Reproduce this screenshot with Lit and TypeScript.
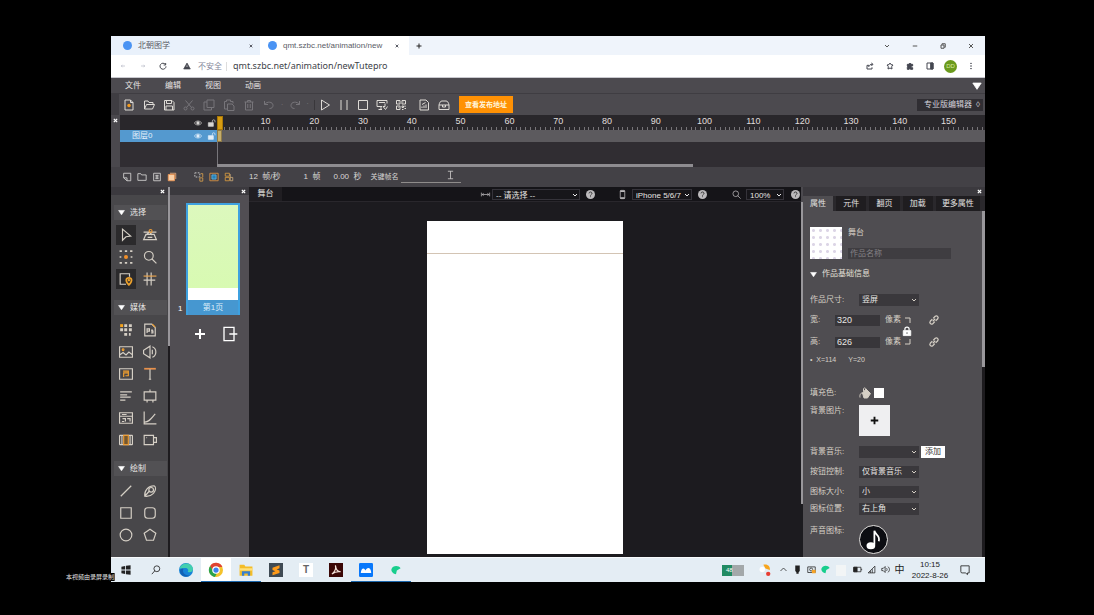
import { LitElement, html, css, svg, SVGTemplateResult } from 'lit';
import { customElement, property } from 'lit/decorators.js';

const ICONS: Record<string, SVGTemplateResult> = {
  reload: svg`<path d="M19 7a9 9 0 1 0 2 6M20 3v6h-6"/>`,
  back: svg`<path d="M20 12H5M10 7l-5 5 5 5"/>`,
  forward: svg`<path d="M4 12h15M14 7l5 5-5 5"/>`,
  warn: svg`<path class="f" d="M12 3l10 18H2z"/><path d="M12 10v5" stroke="#fff"/>`,
  chevdown: svg`<path d="M4 8l8 8 8-8"/>`,
  chevup: svg`<path d="M4 16l8-8 8 8"/>`,
  minus: svg`<path d="M3 12h18"/>`,
  restore: svg`<path d="M4 8h12v13H4zM8 7V3h13v14h-4"/>`,
  x: svg`<path d="M4 4l16 16M20 4L4 20"/>`,
  plus: svg`<path d="M12 2v20M2 12h20"/>`,
  share: svg`<path d="M9 10H3v11h15v-5M8 15c1-6 5-8 12-8M16 3l5 4-5 5"/>`,
  star: svg`<path d="M12 3l3 5 6 1-4 5 1 7-6-3-6 3 1-7-4-5 6-1z"/>`,
  puzzle: svg`<path class="f" d="M4 7h5a3 3 0 1 1 6 0h5v5a3 3 0 1 0 0 5v5h-6a3 3 0 0 0-5 0H4v-6a3 3 0 0 0 0-4z"/>`,
  sidepanel: svg`<path d="M3 3h18v18H3z"/><path class="f" d="M14 3h7v18h-7z"/>`,
  dots: svg`<circle class="f" cx="12" cy="4" r="1"/><circle class="f" cx="12" cy="12" r="1"/><circle class="f" cx="12" cy="20" r="1"/>`,
  tri: svg`<path class="f" d="M2 5h20L12 20z"/>`,
  newdoc: svg`<path d="M4 2h11l5 5v15H4zM15 2v5h5"/><circle cx="12" cy="13" r="3.5" fill="#f39a1c" stroke="none"/>`,
  open: svg`<path d="M3 20V4h7l2 3h8v4M3 20l4-9h16l-4 9z"/>`,
  save: svg`<path d="M3 3h15l4 4v15H3zM7 3v6h10V3M6 22v-8h13v8"/>`,
  cut: svg`<path d="M5 3l12 14M19 3L7 17"/><circle cx="5" cy="19" r="3"/><circle cx="19" cy="19" r="3"/>`,
  copy: svg`<path d="M8 2h14v15H8zM8 6H2v16h15v-5"/>`,
  paste: svg`<path d="M9 20H3V5h4V2h8v3h5v4M9 10h9l4 4v9H9z"/>`,
  trash: svg`<path d="M3 6h18M5 6v16h14V6M9 6V3h6v3M9.500 10v8M14.500 10v8"/>`,
  undo: svg`<path d="M3 4v7h7M3 11c5-7 17-6 17 2 0 4-3 6-7 6"/>`,
  redo: svg`<path d="M21 4v7h-7M21 11C16 4 4 5 4 13c0 4 3 6 7 6"/>`,
  play: svg`<path d="M5 2l16 10L5 22z"/>`,
  pause: svg`<path d="M6 2v20M18 2v20"/>`,
  square: svg`<path d="M3 3h18v18H3z"/>`,
  rsquare: svg`<rect x="3" y="3" width="18" height="18" rx="5"/>`,
  circle: svg`<circle cx="12" cy="12" r="10"/>`,
  preview: svg`<path d="M12 15H2V3h20v6M10 15v6M5 21h7M18 9v6h-4l5 6 4-6M6 7h12"/>`,
  qr: svg`<path d="M3 3h7v7H3zM14 3h7v7h-7zM3 14h7v7H3zM6 6h1M17 6h1M6 17h1M14 14h3v3h-3zM19 19h3M20 13v3M14 21h3"/>`,
  report: svg`<path d="M4 2h12l5 5v15H4zM8 18v-3M12 18v-5M16 18v-7M8 11l7-4"/>`,
  box: svg`<path d="M2 12c1-5 3-8 6-8h8c3 0 5 3 6 8v9H2zM2 12h20M9 12v4h6v-4"/>`,
  eye: svg`<path d="M1 12c5-8 17-8 22 0-5 8-17 8-22 0z"/><circle class="f" cx="12" cy="12" r="4"/>`,
  unlock: svg`<path class="f" d="M1 11h15v11H1z"/><path d="M13 11V6c0-5 8-5 8 0v4"/>`,
  lock: svg`<path class="f" d="M3 11h18v12H3z"/><path d="M7 11V7c0-6 10-6 10 0v4" stroke-width="3"/><path d="M12 15v4" stroke="#444"/>`,
  layer: svg`<path d="M4 3h17v18h-9l-8-7zM4 14h8v7"/>`,
  folder: svg`<path d="M2 20V4h7l2 3h11v13z"/>`,
  dup: svg`<path d="M4 3h16v18H4zM8 8h8M8 12h8M8 16h8M12 8v8"/>`,
  stack: svg`<path d="M7 3h14v14" stroke="#f4b27c"/><path d="M3 6h15v15H3z" fill="#f8cfa7" stroke="#ef9550"/>`,
  onion1: svg`<path d="M2 2h12v10H2z" stroke-dasharray="4 3"/><path d="M16 4h5v8M14 14h7v8h-7z" stroke="#d7a04d"/>`,
  onion2: svg`<path d="M2 3h20v18H2z" stroke="#df9645"/><path d="M7 7h10v10H7z" fill="#2583ba" stroke="#64b4e0"/>`,
  onion3: svg`<path d="M3 3h10v7H3zM3 13h10v8H3z" stroke="#d99b40"/><path d="M15 5v16h6v-8h-6" stroke="#c8a777"/>`,
  cursor: svg`<path d="M6 2l14 12-8 1-6 6z"/>`,
  path: svg`<path d="M1 7h22M1 20l4-9h14l4 9zM5 12l6-5 5 5M8 16h8"/><circle cx="13" cy="5" r="2.500" stroke="#e99b3a"/>`,
  transform: svg`<path d="M1 2h4M10 2h4M19 2h4M1 22h4M10 22h4M19 22h4M1 12h3M20 12h3" stroke-width="3"/><circle cx="12" cy="12" r="3.500" fill="#f2902a" stroke="none"/>`,
  search: svg`<circle cx="10" cy="10" r="7.500"/><path d="M15 15l8 8"/>`,
  searchr: svg`<circle cx="14" cy="9" r="7"/><path d="M9 14l-7 8"/>`,
  stagepin: svg`<path d="M12 21H2V3h16v5"/><path d="M17 22c-7-7-5-12 0-12s7 5 0 12z" stroke="#eca12c" stroke-width="3"/><circle cx="17" cy="14" r="1" stroke="#eca12c"/>`,
  guides: svg`<path d="M7 1v22M14 1v22M1 14h20"/><path d="M1 7h22" stroke="#e8a34c"/>`,
  grid: svg`<path class="f" d="M9 2h5v5H9zM17 2h5v5h-5zM9 9h5v5H9zM17 9h5v5h-5zM2 9h5v5H2zM9 17h5v5H9zM17 17h3v5h-3z" stroke="none"/><path d="M2 2h5v5H2z" fill="#f7a51d" stroke="none"/>`,
  ps: svg`<path d="M3 2h12l6 6v14H3zM7 17v-7h4v4H7M17 12h-2v2h2v3h-3"/><path d="M16 2l5 5" stroke="#f1a02f"/>`,
  image: svg`<path d="M1 3h22v18H1zM1 17l6-4 5 4 5-5 6 5"/><circle cx="7" cy="8" r="1.500" stroke="#f1a02f"/>`,
  sound: svg`<path d="M1 9v6l11 7V2zM12 2v20M16 3c8 3 8 15 0 18M16 8v8"/>`,
  video: svg`<path d="M1 3h22v18H1z"/><path d="M7 7h9v3H8v7M16 10v5h-5" stroke="#f1a02f"/>`,
  text: svg`<path d="M2 3h20" stroke="#e6914c" stroke-width="3"/><path d="M12 4v18M10 21h4"/>`,
  lines: svg`<path d="M2 5h20M2 10h12M2 14h18M2 19h9"/>`,
  board: svg`<path d="M2 5h20v14H2zM12 5V1M7 19v4M17 19v4"/>`,
  form: svg`<path d="M1 3h22v18H1zM1 9h22M5 6h8M6 13h5v5M14 13h5v5M5 18h4"/>`,
  chart: svg`<path d="M2 1v21h21M3 19c8 0 11-6 18-14"/>`,
  film: svg`<path d="M1 4v16M5 4v16M19 4v16M23 4v16M1 4h22M1 20h22"/><path d="M8 4h8v16H8z" stroke="#e99a34" fill="#74572f"/>`,
  mug: svg`<path d="M2 4h16v16H2zM18 8h5v8h-5M6 8h1"/>`,
  line: svg`<path d="M3 21L21 3"/>`,
  pen: svg`<path d="M3 21C2 11 9 3 19 3c4 2 3 8-1 13-4 4-9 6-15 5zM3 21l8-9"/><circle cx="14" cy="10" r="4"/>`,
  penta: svg`<path d="M12 2l10 7-4 12H6L2 9z"/>`,
  addpage: svg`<path d="M18 7V2H3v20h15v-5M11 12h12M18 7v10"/>`,
  width: svg`<path d="M1 7v10M23 7v10M3 12h18M7 9l-4 3 4 3M17 9l4 3-4 3"/>`,
  phone: svg`<rect x="6" y="1" width="12" height="22" rx="2"/><path d="M6 3h12M6 21h12" stroke-width="4"/>`,
  help: svg`<circle class="f" cx="12" cy="12" r="12" stroke="none"/><path d="M8 9c0-5 8-5 8 0 0 3-4 3-4 6M12 17v2" stroke="#333" stroke-width="2.500"/>`,
  link: svg`<path d="M9 15l6-6M10 8l5-5c4-3 9 2 6 6l-5 5M14 16l-5 5c-4 3-9-2-6-6l5-5"/>`,
  bracketTop: svg`<path d="M0 4h20v20"/>`,
  bracketBot: svg`<path d="M20 0v20H0"/>`,
  bucket: svg`<path class="f" d="M7 12l7-8 9 9-6 9H10z"/><path d="M8 12c-5-1-7 4-6 9M9 9V4c1-4 5-2 5 1"/>`,
  note: svg`<path d="M13 18V2c1 5 7 5 5 12" stroke-width="2"/><ellipse class="f" cx="9" cy="19" rx="4" ry="3"/>`,
  ibeam: svg`<path d="M5 2h14M5 22h14M12 2v20"/>`,
  win: svg`<path class="f" stroke="none" d="M1 4l9-1.500V11H1zM12 2l11-1.500V11H12zM1 13h9v8.500L1 20zM12 13h11v10.500L12 22z"/>`,
  edge: svg`<circle cx="12" cy="12" r="12" fill="#1683d8" stroke="none"/><path d="M1 9C4-2 22-2 24 10c0 6-6 7-9 5 3-4-2-8-7-6-3 0-6 1-7 0z" fill="#43cfae" stroke="none"/><path d="M8 10c-4 5 2 13 12 11-10 6-20-1-18-9 1-2 4-3 6-2z" fill="#1261b5" stroke="none"/>`,
  chrome: svg`<circle cx="12" cy="12" r="12" fill="#f4c22b" stroke="none"/><path d="M2 5a12 12 0 0 1 21 2H12l-5 8z" fill="#df4332" stroke="none"/><path d="M2 5l6 10 5 4-3 5A12 12 0 0 1 2 5z" fill="#2ba24c" stroke="none"/><circle cx="12" cy="12" r="5.500" fill="#3f82ee" stroke="#fff" stroke-width="2"/>`,
  explorer: svg`<path d="M1 3h8l2 3h12v16H1z" fill="#f4bd28" stroke="none"/><path d="M1 9h22v4H1z" fill="#ffe07a" stroke="none"/><path d="M5 22v-8h14v8h-4v-4H9v4z" fill="#357fd0" stroke="none"/>`,
  sublime: svg`<path d="M0 0h24v24H0z" fill="#3f4a54" stroke="none"/><path d="M6 8l12-4v5l-5 2 5 2v4L6 21v-5l5-2-5-2z" fill="#ff9b1a" stroke="none"/>`,
  acrobat: svg`<path d="M0 0h24v24H0z" fill="#3a0706" stroke="none"/><path d="M5 19C11 14 12 8 11 4c1 8 4 11 9 11-6-1-10 0-15 4z" stroke="#f5e3da"/>`,
  meet: svg`<rect width="24" height="24" rx="2" fill="#0878fb" stroke="none"/><path d="M3 17c1-9 6-10 8-4 3-8 10-5 10 4z" fill="#fff" stroke="none"/>`,
  leaf: svg`<path d="M1 10C4 0 19 0 23 8l-9 5-2 9C6 21 0 16 1 10z" fill="#18ce8d" stroke="none"/>`,
  weather: svg`<path d="M8 3c8-2 13 3 12 10l-8-3z" fill="#f7a51d" stroke="none"/><circle cx="6" cy="12" r="5" fill="#fff" stroke="none"/><circle cx="17" cy="20" r="4" fill="#e83d32" stroke="none"/>`,
  mic: svg`<path class="f" stroke="none" d="M6 1h12v15l-3 3v4H9v-4l-3-3z"/>`,
  cam: svg`<path d="M2 5h20v15H2z"/><circle cx="11" cy="12" r="4"/><path d="M13 13h10v9H13z" fill="#f6a326" stroke="none"/>`,
  battery: svg`<path d="M2 6h19v12H2zM23 10v4"/><path class="f" d="M2 6h9v12H2z"/>`,
  wifi: svg`<path d="M3 21L21 3v18zM9 16v5M14 11v10"/>`,
  speaker: svg`<path d="M2 9v6h4l5 5V4L6 9zM14 8c3 2 3 6 0 8M18 4c6 4 6 12 0 16"/>`,
  notif: svg`<path d="M2 2h20v17h-4v4l-5-4H5c-2 0-3-1-3-3z"/>`,
};

@customElement('ui-icon')
export class UiIcon extends LitElement {
  @property() name = '';
  static styles = css`
    :host { display: inline-flex; flex: none; width: 12px; height: 12px; }
    svg { width: 100%; height: 100%; overflow: visible; fill: none; stroke: currentColor; stroke-width: var(--sw, 2); }
    .f { fill: currentColor; }
  `;
  render() {
    return html`<svg viewBox="0 0 24 24" aria-hidden="true">${ICONS[this.name]}</svg>`;
  }
}

const icon = (name: string, cls = '') => html`<ui-icon name=${name} class=${cls}></ui-icon>`;
const btn = (name: string, label: string, cls = '') =>
  html`<button class="ib ${cls}" aria-label=${label}>${icon(name)}</button>`;
const select = (id: string, value: string, cls = '', label = '') => html`
  <span class="sel ${cls}"><select id=${id} aria-label=${label || value || id}><option>${value}</option></select>${icon('chevdown', 'chev')}</span>`;

@customElement('app-root')
export class AppRoot extends LitElement {
  static styles = css`
    :host {
      display: flex; flex-direction: column; position: relative; box-sizing: border-box;
      height: 100vh; padding: 36px 109px 33px 111px; background: #000; color: #d8d6d4;
      font: 8px/12px "Liberation Sans", "Noto Sans CJK SC", sans-serif; overflow: hidden;
    }
    * { box-sizing: border-box; }
    button, input, select { font: inherit; color: inherit; margin: 0; padding: 0; border: 0; background: none; min-width: 0; }
    a { color: inherit; text-decoration: none; }
    .ib { display: flex; align-items: center; justify-content: center; flex: none; }
    .grow { flex: 1; }

    .tabs { display: flex; align-items: center; flex: none; height: 19px; background: #eff4fb; color: #5a5c66; }
    .tab { display: flex; align-items: center; gap: 6px; height: 100%; padding: 0 7px 0 12px; width: 149px; background: #e9f1fb; }
    .tab.on { background: #fff; padding: 0 10px 0 8px; }
    .tab .t { flex: 1; white-space: nowrap; }
    .tab ui-icon { width: 4px; height: 4px; --sw: 6; }
    .dot { width: 9px; height: 9px; border-radius: 50%; background: #4a93f3; flex: none; }
    .newtab { width: 20px; color: #222; }
    .newtab ui-icon, .winctl ui-icon { width: 6px; height: 6px; --sw: 4; }
    .winctl { display: flex; color: #555; }
    .winctl .ib { width: 28px; }

    .addr { display: flex; align-items: center; flex: none; height: 23px; background: #fff; color: #44464e; border-bottom: 1px solid #c9c9cf; }
    .nav { display: flex; padding-left: 2px; }
    .nav .ib { width: 20px; }
    .nav .dim { color: #b9bcc8; }
    .nav .dim ui-icon { width: 6px; height: 6px; }
    .nav ui-icon { width: 8px; height: 8px; --sw: 3; }
    .warn { width: 8px; height: 8px; margin-left: 10px; }
    .unsafe { margin: 0 6px 0 7px; color: #85879a; border-right: 1px solid #ddd; padding-right: 4px; line-height: 9px; }
    .url { flex: 1; font-size: 9px; font-family: "Noto Sans", sans-serif; color: #3d3f49; }
    .ext { display: flex; align-items: center; color: #444650; padding-right: 4px; }
    .ext .ib { width: 20px; }
    .ext ui-icon { width: 8px; height: 8px; --sw: 3; }
    .ava { display: flex; align-items: center; justify-content: center; width: 13px; height: 13px; margin: 0 4px; border-radius: 50%; background: #6b9a1c; color: #d5e9a0; font-size: 6px; }

    .menu { display: flex; align-items: center; flex: none; height: 16px; padding: 0 3px 0 2px; background: #4c4a4f; border-bottom: 1px solid #3f3d42; color: #e6e4e2; }
    .menu button { width: 40px; }
    .menu .ib { width: 10px; color: #fff; }
    .menu ui-icon { width: 10px; height: 10px; }

    .bar { display: flex; align-items: center; flex: none; height: 21px; padding: 0 2px 0 8px; background: linear-gradient(90deg, #3f3d42 8px, #4c4a4f 8px); color: #dedbd6; }
    .bar .ib { width: 20px; }
    .bar .p { width: 19px; }
    .bar .dim { color: #77757a; }
    .bar ui-icon { width: 12px; height: 12px; }
    .sep { width: 6px; text-align: center; color: #77757a; }
    .sep.end { width: 10px; border-right: 1px solid #39373b; height: 10px; line-height: 8px; padding-right: 4px; }
    .g4 { width: 4px; }
    .pub { height: 17px; padding: 0 6px; margin-left: 5px; background: #ff9104; color: #fff5dc; font-size: 7px; font-weight: 700; white-space: nowrap; }
    .ver { display: flex; align-items: center; gap: 4px; height: 12px; padding: 0 3px 0 7px; background: #302e33; color: #d5d4dc; white-space: nowrap; }

    .time { display: grid; grid-template-columns: 9px 97px 1fr; grid-template-rows: 15px 12px 22px 3px; flex: none; background: #302d32; }
    .edge { grid-row: 1 / 5; display: flex; justify-content: center; padding-top: 3px; background: #4a484d; color: #fff; }
    .lh, .lrow { display: flex; align-items: center; gap: 6px; padding-right: 1px; }
    .lh { justify-content: flex-end; background: #29272b; }
    .lh ui-icon, .lrow ui-icon { width: 8px; height: 8px; }
    .lrow { background: #5499cf; color: #e2effa; padding-left: 12px; }
    .lrow span { flex: 1; }
    .ruler { position: relative; background: #29272b; overflow: hidden; }
    .nums { display: grid; grid-template-columns: repeat(15, 1fr); margin: 0 12px 0 24px; text-align: center; line-height: 13px; font-size: 9px; color: #e0dfdd; }
    .ticks { position: absolute; left: 7px; right: 0; bottom: 0; display: flex; justify-content: space-between; }
    .ticks i { width: 1px; height: 3px; background: #777478; }
    .head { position: absolute; left: 0; top: 1px; width: 6px; height: 14px; background: #d79c12; border: 1px solid #a97808; }
    .frames { background: #5c5a5e; }
    .frames i { display: block; width: 5px; height: 12px; background: #c5ad6b; border: 1px solid #8f7b48; }
    .empty { grid-column: 2; }
    .fr { border-left: 1px solid #77757a; }
    .hs { grid-column: 3; width: 62%; height: 3px; background: #8e8c90; }
    .tbar { display: flex; align-items: center; flex: none; height: 20px; padding-left: 8px; background: #434146; color: #d9d7d6; position: relative; white-space: nowrap; }
    .tbar .ib { width: 15px; }
    .tbar ui-icon { width: 10px; height: 10px; }
    .tbar .gap { width: 12px; }
    .tbar .v { margin-left: 13px; }
    .tbar .w { margin-left: 23px; }
    .tbar label { margin-left: 9px; font-size: 7px; }
    .tbar input { width: 60px; height: 12px; border-bottom: 1px solid #8f8c8b; margin-left: 2px; }
    .tbar .ibeam { position: absolute; left: 335px; top: 3px; width: 9px; height: 10px; }

    .work { display: flex; flex: 1; min-height: 0; background: #4c4a4f; }
    .strip { display: flex; align-items: center; justify-content: flex-end; flex: none; height: 8px; padding-right: 3px; background: #3b393e; color: #fff; }
    .close { width: 5px; height: 5px; --sw: 6; }
    .col { display: flex; flex-direction: column; flex: none; }
    .tools { width: 57px; background: #48474a; }
    .inner { padding: 10px 1px 0 3px; flex: 1; min-height: 0; overflow: hidden; }
    .sec { display: flex; align-items: center; gap: 5px; height: 15px; margin: 0; padding-left: 4px; font: inherit; background: #525154; color: #e8e6e4; }
    .sec ui-icon, .h ui-icon { width: 7px; height: 7px; color: #fff; }
    .tg { display: grid; grid-template-columns: 24px 24px; grid-auto-rows: 22px; padding: 4px 0 10px; color: #d5cfc5; }
    .tg .ib { margin: 1px 2px; }
    .tg .ib.sel0 { background: #2b2a2c; }
    .tg ui-icon { width: 14px; height: 14px; }
    .vs { width: 2px; flex: none; display: flex; flex-direction: column; background: #1d1b1e; }
    .vs::before { content: ""; height: 43%; background: #99979b; }
    .pages { width: 79px; background: #514e53; }
    .pg { display: flex; align-items: flex-end; gap: 3px; padding: 8px 9px 0 8px; }
    .pg .n { width: 5px; color: #fff; }
    .thumb { flex: 1; background: #4697d0; border: 2px solid #3ea1e0; border-bottom: 0; text-align: center; color: #dcecf8; }
    .thumb .pic { height: 95px; background: linear-gradient(#dcf8bd, #d8fab2 83px, #fff 83px); }
    .thumb .nm { line-height: 15px; }
    .pa { display: flex; gap: 14px; padding: 11px 10px 0 22px; color: #fff; }
    .pa ui-icon { width: 16px; height: 16px; }
    .pa .ib:first-child { width: 16px; }
    .pa .ib:first-child ui-icon { width: 12px; height: 12px; --sw: 4; }

    .stage { flex: 1; display: flex; flex-direction: column; background: #1c1b1f; min-width: 0; }
    .sbar { display: flex; align-items: center; flex: none; height: 15px; background: #151418; border-bottom: 1px solid #29272c; white-space: nowrap; }
    .stab { width: 33px; height: 14px; background: #201e22; color: #e6e3e0; flex: none; }
    .sbar .grow { min-width: 0; }
    .sbar ui-icon { width: 9px; height: 9px; color: #bcbabc; }
    .sbar .sel ui-icon { width: 6px; height: 6px; color: #eee; }
    .sbar .ib { width: 20px; }
    .sbar .ib.last { width: 17px; justify-content: flex-end; padding-right: 1px; }
    .sbar .sel { height: 11px; }
    .sbar .sel select { border: 1px solid #35333a; padding-left: 3px; background: #17161a; }
    .g12 { width: 12px; }
    .g11 { width: 14px; }
    .sel { position: relative; display: flex; flex: none; height: 12px; }
    .sel select { appearance: none; width: 100%; height: 100%; padding-left: 3px; background: #3a383c; color: #e6e4e2; }
    .sel .chev { position: absolute; right: 2px; top: 3px; width: 6px; height: 6px; --sw: 4; pointer-events: none; }
    .w88 { width: 88px; } .w60 { width: 60px; } .w38 { width: 38px; }
    .canvas { flex: 1; width: 196px; align-self: center; margin: 19px 0 3px; background: #fff; }
    .canvas::before { content: ""; display: block; height: 32px; border-bottom: 1px solid #d3c4b4; }
    .vs.st { background: #1c1b1f; margin-top: 15px; width: 2px; }
    .vs.st::before { height: 85%; }

    .props { width: 182px; background: #4f4d51; }
    .props .strip { height: 9px; }
    .ptabs { display: flex; gap: 3px; flex: none; height: 15px; background: #2a282c; color: #e3e1e0; padding-right: 5px; }
    .ptabs button { flex: 30; background: #1f1d20; white-space: nowrap; }
    .ptabs button.on { background: #4f4d51; }
    .ptabs button:last-child { flex: 44; }
    .pwrap { display: flex; flex: 1; min-height: 0; }
    .pbody { flex: 1; min-width: 0; padding: 16px 7px 0 7px; overflow: hidden; color: #d6d0c6; }
    .phead { display: flex; gap: 6px; height: 32px; padding-right: 24px; }
    .chk { width: 32px; height: 32px; flex: none; background: #fff radial-gradient(#dcd5e6 1px, #fff 2px) 0 0 / 7px 7px; }
    .phead div { flex: 1; display: flex; flex-direction: column; justify-content: space-between; }
    .phead input { width: 100%; height: 11px; padding-left: 2px; background: #3f3d41; }
    .phead input::placeholder { color: #858286; opacity: 1; }
    .h { display: flex; align-items: center; gap: 5px; height: 16px; margin: 7px 0 10px; font: inherit; color: #e4e0d8; }
    .r { display: flex; align-items: center; height: 16px; margin-top: 4px; }
    .r > label, .r > .l { width: 49px; flex: none; white-space: nowrap; }
    .dims { display: grid; grid-template-columns: 25px 45px 5px 16px 13px 15px 1fr; grid-template-rows: 16px 16px; row-gap: 6px; align-items: center; position: relative; margin: 4px 0 2px; }
    .dims input { grid-column: 2; height: 11px; padding-left: 2px; background: #38363a; font-size: 9px; color: #e8e6e4; }
    .dims .u { grid-column: 4; white-space: nowrap; }
    .dims .b { grid-column: 5; width: 6px; height: 6px; justify-self: center; --sw: 4; }
    .dims a { grid-column: 7; display: flex; }
    .dims a ui-icon { width: 10px; height: 10px; --sw: 3; }
    .dims .lk { position: absolute; left: 92px; top: 14px; color: #fff; }
    .dims .lk ui-icon { width: 10px; height: 10px; }
    .xy { height: 16px; gap: 12px; margin: 0 0 17px; font-size: 7px; }
    .sw { width: 10px; height: 10px; margin-left: 3px; background: #fff; }
    .top { align-items: flex-start; height: 31px; }
    .addimg { width: 31px; height: 31px; background: #efeff1; color: #111; }
    .addimg ui-icon { width: 9px; height: 9px; --sw: 5; }
    .r.m8 { margin-top: 8px; }
    .r.m1 { margin-top: 1px; }
    .add { width: 24px; height: 12px; margin-left: 2px; background: #fff; color: #333; }
    .mus { width: 29px; height: 29px; border: 1px solid #e3e1df; border-radius: 50%; background: #0c0d12; color: #fff; }
    .mus ui-icon { width: 21px; height: 21px; }
    .vs.pr { width: 3px; }
    .vs.pr::before { height: 45%; }

    .task { display: flex; align-items: center; flex: none; height: 25px; background: #e4edf4; border-top: 1px solid #f7fafc; color: #222; }
    .task .ib { width: 30px; height: 100%; border-bottom: 1px solid transparent; }
    .task .ib.run { border-color: #1c67ad; }
    .task .ib.on { background: #fff; }
    .task .ib ui-icon { width: 14px; height: 14px; }
    .task .ib.sm ui-icon { width: 10px; height: 10px; }
    .tt { display: flex; align-items: center; justify-content: center; width: 14px; height: 14px; background: #fff; color: #666; font-size: 10px; font-weight: 700; }
    .task .chip { width: 22px; height: 11px; padding-left: 4px; margin-right: 11px; background: linear-gradient(90deg, #218b63 10px, #a3a8aa 10px); color: #fff; font-size: 6px; line-height: 11px; }
    .task .tray { width: 14px; }
    .task .tray ui-icon { width: 9px; height: 9px; }
    .task .tray.big { width: 21px; }
    .task .tray.big ui-icon { width: 13px; height: 13px; }
    .ime { width: 15px; text-align: center; font-size: 10px; }
    .blank { width: 10px; height: 11px; margin: 0 4px; background: #f2f5f6; }
    .clock { width: 46px; text-align: center; font-size: 8px; line-height: 11px; }
    .task .nt { width: 24px; margin-right: 8px; }
    .task .nt ui-icon { width: 10px; height: 10px; }
    .cap { position: absolute; left: 66px; bottom: 34px; height: 8px; display: flex; align-items: center; font-size: 6px; line-height: 8px; color: #e5e5e5; white-space: nowrap; background: #000; border-right: 1px solid #555; }
  `;

  render() {
    const tools = (rows: [string, string][], on: string[] = []) => html`<div class="tg">
      ${rows.map(([n, l]) => btn(n, l, on.includes(n) ? 'sel0' : ''))}</div>`;
    return html`
      <div class="tabs">
        <div class="tab"><span class="dot"></span><span class="t">北朝图学</span>${icon('x')}</div>
        <div class="tab on"><span class="dot"></span><span class="t">qmt.szbc.net/animation/new</span>${icon('x')}</div>
        ${btn('plus', '新标签页', 'newtab')}
        <span class="grow"></span>
        <div class="winctl">${btn('chevdown', '搜索标签页')}${btn('minus', '最小化')}${btn('restore', '还原')}${btn('x', '关闭')}</div>
      </div>
      <div class="addr">
        <div class="nav">${btn('back', '后退', 'dim')}${btn('forward', '前进', 'dim')}${btn('reload', '刷新')}</div>
        ${icon('warn', 'warn')}<span class="unsafe">不安全</span>
        <input class="url" aria-label="地址" .value=${'qmt.szbc.net/animation/newTutepro'} />
        <div class="ext">${btn('share', '分享')}${btn('star', '收藏')}${btn('puzzle', '扩展')}${btn('sidepanel', '侧边栏')}<button class="ava" aria-label="用户">DD</button>${btn('dots', '更多')}</div>
      </div>

      <div class="menu">
        <button>文件</button><button>编辑</button><button>视图</button><button>动画</button>
        <span class="grow"></span>${btn('tri', '收起')}
      </div>
      <div class="bar">
        ${btn('newdoc', '新建')}${btn('open', '打开')}${btn('save', '保存')}
        ${btn('cut', '剪切', 'dim')}${btn('copy', '复制', 'dim')}${btn('paste', '粘贴', 'dim')}${btn('trash', '删除', 'dim')}
        ${btn('undo', '撤销', 'dim')}<span class="sep">·</span>${btn('redo', '重做', 'dim')}<span class="sep end">·</span>
        ${btn('play', '播放', 'p')}${btn('pause', '暂停', 'p')}${btn('square', '停止', 'p')}${btn('preview', '预览', 'p')}${btn('qr', '二维码', 'p')}
        <span class="g4"></span>${btn('report', '统计')}${btn('box', '素材库')}
        <button class="pub">查看发布地址</button>
        <span class="grow"></span>
        <button class="ver">专业版编辑器 <span>◊</span></button>
      </div>

      <div class="time">
        <div class="edge">${icon('x', 'close')}</div>
        <div class="lh">${icon('eye')}${icon('unlock')}</div>
        <div class="ruler">
          <div class="nums">${Array.from({ length: 15 }, (_, i) => html`<span>${(i + 1) * 10}</span>`)}</div>
          <div class="ticks">${Array.from({ length: 157 }, () => html`<i></i>`)}</div>
          <div class="head"></div>
        </div>
        <div class="lrow"><span>图层0</span>${icon('eye')}${icon('unlock')}</div>
        <div class="frames"><i></i></div>
        <div class="empty"></div><div class="fr"></div>
        <div class="hs"></div>
      </div>
      <div class="tbar">
        ${btn('layer', '新建图层')}${btn('folder', '新建文件夹')}${btn('dup', '复制图层')}${btn('stack', '删除图层')}
        <span class="gap"></span>${btn('onion1', '洋葱皮')}${btn('onion2', '洋葱皮轮廓')}${btn('onion3', '编辑多帧')}
        <span class="v">12&nbsp; 帧/秒</span><span class="w">1&nbsp; 帧</span><span class="v">0.00&nbsp; 秒</span>
        <label for="kf">关键帧名</label><input id="kf" />
        ${icon('ibeam', 'ibeam')}
      </div>

      <div class="work">
        <div class="col tools">
          <div class="strip">${icon('x', 'close')}</div>
          <div class="inner">
            <h2 class="sec">${icon('tri')}选择</h2>
            ${tools([['cursor', '选择'], ['path', '节点'], ['transform', '变形'], ['search', '缩放'], ['stagepin', '舞台定位'], ['guides', '辅助线']], ['cursor', 'stagepin'])}
            <h2 class="sec">${icon('tri')}媒体</h2>
            ${tools([['grid', '素材'], ['ps', 'PSD'], ['image', '图片'], ['sound', '声音'], ['video', '视频'], ['text', '文字'], ['lines', '段落'], ['board', '画板'], ['form', '表单'], ['chart', '图表'], ['film', '幻灯片'], ['mug', '控件']])}
            <h2 class="sec">${icon('tri')}绘制</h2>
            ${tools([['line', '直线'], ['pen', '钢笔'], ['square', '矩形'], ['rsquare', '圆角矩形'], ['circle', '圆形'], ['penta', '多边形']])}
          </div>
        </div>
        <div class="vs"></div>
        <div class="col pages">
          <div class="strip">${icon('x', 'close')}</div>
          <div class="pg"><span class="n">1</span><div class="thumb"><div class="pic"></div><div class="nm">第1页</div></div></div>
          <div class="pa">${btn('plus', '添加页')}${btn('addpage', '插入页')}</div>
        </div>

        <div class="stage">
          <div class="sbar">
            <button class="stab">舞台</button><span class="grow"></span>
            ${icon('width')}&nbsp;${select('fit', '-- 请选择 --', 'w88', '适配')}${btn('help', '帮助')}
            <span class="g12"></span>${btn('phone', '设备')}
            ${select('dev', 'iPhone 5/6/7', 'w60', '设备')}${btn('help', '帮助')}<span class="g11"></span>
            ${btn('search', '缩放')}
            ${select('zoom', '100%', 'w38', '缩放')}${btn('help', '帮助', 'last')}
          </div>
          <div class="canvas"></div>
        </div>
        <div class="vs st"></div>

        <div class="col props">
          <div class="strip">${icon('x', 'close')}</div>
          <div class="ptabs"><button class="on">属性</button><button>元件</button><button>翻页</button><button>加载</button><button>更多属性</button></div>
          <div class="pwrap">
            <div class="pbody">
              <div class="phead"><span class="chk"></span><div><span>舞台</span><input placeholder="作品名称" aria-label="作品名称" /></div></div>
              <h2 class="h">${icon('tri')}作品基础信息</h2>
              <div class="r"><label for="size">作品尺寸:</label>${select('size', '竖屏', 'w60', '作品尺寸')}</div>
              <div class="dims">
                <label for="wd">宽:</label><input id="wd" .value=${'320'} /><span class="u">像素</span>${icon('bracketTop', 'b')}<a href="#" aria-label="绑定宽度">${icon('link')}</a>
                <label for="ht">高:</label><input id="ht" .value=${'626'} /><span class="u">像素</span>${icon('bracketBot', 'b')}<a href="#" aria-label="绑定高度">${icon('link')}</a>
                <button class="ib lk" aria-label="锁定比例">${icon('lock')}</button>
              </div>
              <div class="r xy"><span>•&nbsp; X=114</span><span>Y=20</span></div>
              <div class="r"><span class="l">填充色:</span>${btn('bucket', '填充')}<button class="sw" aria-label="颜色"></button></div>
              <div class="r top"><span class="l">背景图片:</span>${btn('plus', '添加图片', 'addimg')}</div>
              <div class="r m8"><label for="bgm">背景音乐:</label>${select('bgm', '', 'w60', '背景音乐')}<button class="add">添加</button></div>
              <div class="r"><label for="ctl">按钮控制:</label>${select('ctl', '仅背景音乐', 'w60', '按钮控制')}</div>
              <div class="r"><label for="isz">图标大小:</label>${select('isz', '小', 'w60', '图标大小')}</div>
              <div class="r m1"><label for="ips">图标位置:</label>${select('ips', '右上角', 'w60', '图标位置')}</div>
              <div class="r top m8"><span class="l">声音图标:</span>${btn('note', '声音图标', 'mus')}</div>
            </div>
            <div class="vs pr"></div>
          </div>
        </div>
      </div>

      <div class="task">
        ${btn('win', '开始', 'sm')}${btn('searchr', '搜索', 'sm')}${btn('edge', 'Edge')}${btn('chrome', 'Chrome', 'on run')}${btn('explorer', '文件资源管理器', 'run')}${btn('sublime', 'Sublime')}
        <button class="ib" aria-label="Typora"><span class="tt">T</span></button>
        ${btn('acrobat', 'Acrobat')}${btn('meet', '会议', 'run')}${btn('leaf', '录屏', 'run sm')}
        <span class="grow"></span>
        <span class="chip">48</span>
        ${btn('weather', '天气', 'tray big')}${btn('chevup', '显示隐藏图标', 'tray')}${btn('mic', '麦克风', 'tray')}${btn('cam', '相机', 'tray')}${btn('leaf', '录屏', 'tray')}
        <span class="blank"></span>${btn('battery', '电池', 'tray')}${btn('wifi', '网络', 'tray')}${btn('speaker', '音量', 'tray')}
        <span class="ime">中</span>
        <div class="clock">10:15<br />2022-8-26</div>
        ${btn('notif', '通知', 'nt')}
      </div>
      <div class="cap">本视频由录屏录制</div>
    `;
  }
}
